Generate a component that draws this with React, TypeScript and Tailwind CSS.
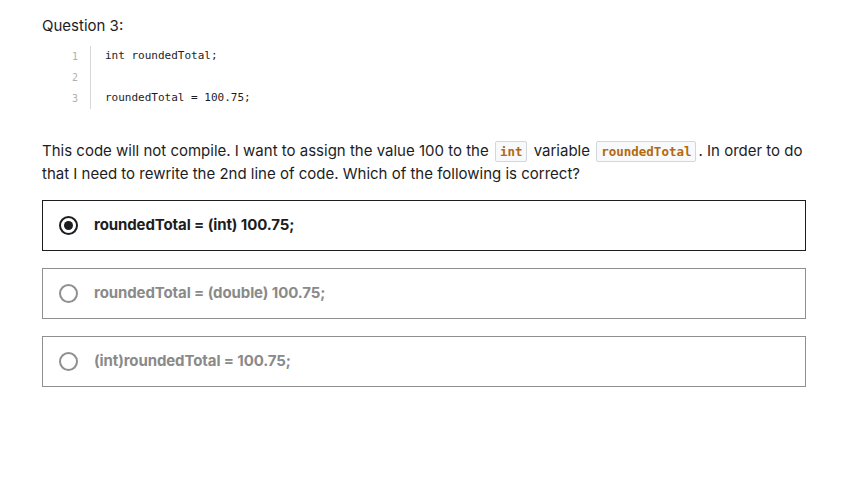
const code = ['int roundedTotal;', '', 'roundedTotal = 100.75;'];

const options = [
  { label: 'roundedTotal = (int) 100.75;', selected: true },
  { label: 'roundedTotal = (double) 100.75;', selected: false },
  { label: '(int)roundedTotal = 100.75;', selected: false },
];

const InlineCode = ({ children }: { children: React.ReactNode }) => (
  <code className="mx-[2px] inline-block rounded-[2px] border border-[#d1d7dc] bg-[#f7f9fa] px-[4px] align-baseline font-['DejaVu_Sans_Mono',monospace] text-[12.5px] font-bold leading-[19px] text-[#b4690e]">
    {children}
  </code>
);

export default function App() {
  return (
    <div className="min-h-screen w-full bg-white pl-[42px] pt-[16px] font-['Inter','Noto_Sans',sans-serif] text-[#1c1d1f]">
      <div className="w-[764px]">
        <h2 className="text-[15px] leading-[20px]">Question 3:</h2>

        <div className="mt-[10px] flex flex-col pl-[26px] font-['DejaVu_Sans_Mono',monospace] text-[11px]">
          {code.map((line, i) => (
            <div key={i} className="flex h-[21px] items-center">
              <span className="mr-[12px] w-[10px] text-right text-[10px] text-[#b0b0b0]">{i + 1}</span>
              <span className="h-full w-[1px] bg-[#d8d8d8]"></span>
              <span className="pl-[14px] text-[#1c1d1f]">{line}</span>
            </div>
          ))}
        </div>

        <p className="mt-[30px] text-[15px] leading-[23px]">
          This code will not compile. I want to assign the value 100 to the <InlineCode>int</InlineCode> variable{' '}
          <InlineCode>roundedTotal</InlineCode>. In order to do that I need to rewrite the 2nd line of code. Which of
          the following is correct?
        </p>

        <div className="mt-[15px] flex flex-col gap-[17px]">
          {options.map((o) => (
            <div
              key={o.label}
              className={`flex h-[51px] items-center gap-[16px] border pl-[16px] ${
                o.selected ? 'border-[#1c1d1f]' : 'border-[#8f8f8f]'
              }`}
            >
              <span
                className={`flex h-[19px] w-[19px] items-center justify-center rounded-full border-2 ${
                  o.selected ? 'border-[#1c1d1f]' : 'border-[#8f8f8f]'
                }`}
              >
                {o.selected && <span className="h-[9px] w-[9px] rounded-full bg-[#1c1d1f]"></span>}
              </span>
              <span
                className={`text-[15px] font-bold tracking-[-0.1px] ${o.selected ? 'text-[#1c1d1f]' : 'text-[#8a8a8a]'}`}
              >
                {o.label}
              </span>
            </div>
          ))}
        </div>
      </div>
    </div>
  );
}
